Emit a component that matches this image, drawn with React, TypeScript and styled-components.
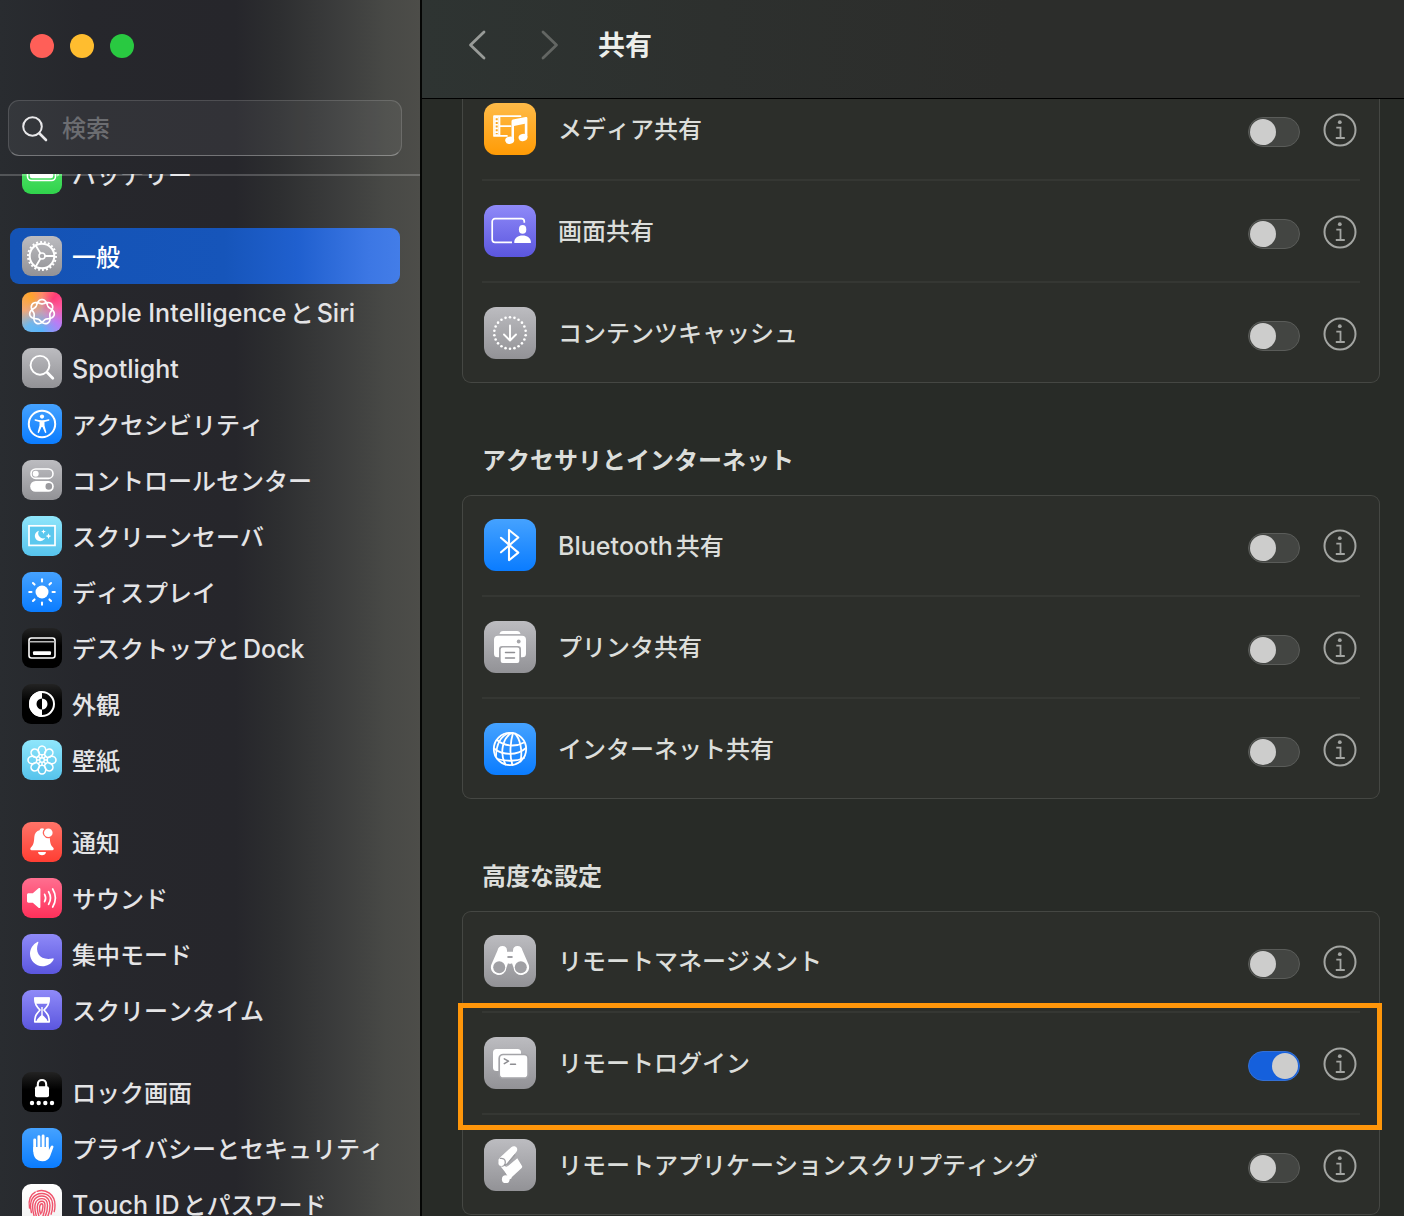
import React, { useLayoutEffect, useRef, useState } from "react";
import styled, { createGlobalStyle, css } from "styled-components";

const GlobalStyle = createGlobalStyle`
  *, *::before, *::after { box-sizing: border-box; }
  body {
    margin: 0;
    background: #282b27;
    color: #dcdedb;
    font-family: Inter, "Noto Sans CJK JP", sans-serif;
    font-size: 24px;
    font-kerning: none;
    line-height: 32px;
    text-autospace: normal;
  }
  ul { list-style: none; margin: 0; padding: 0; }
`;

const Window = styled.div`
  display: grid;
  grid-template-columns: 422px minmax(0, 1fr);
  height: 100vh;
  overflow: hidden;
`;

/* ---------- Sidebar ---------- */

const Sidebar = styled.aside`
  display: flex;
  flex-direction: column;
  min-height: 0;
  border-right: 2px solid #050605;
  background: linear-gradient(
    90deg,
    #292c30 0%,
    #26272c 20%,
    #26262b 56%,
    #2d2e30 66%,
    #3b3c3c 80%,
    #484946 92%,
    #4d4d49 100%
  );
`;

/* The translucent rule under the search box lies over the top of the list. */
const SidebarHeader = styled.div`
  position: relative;
  z-index: 1;
  display: flex;
  flex-direction: column;
  gap: 42px;
  margin-bottom: -2px;
  padding: 34px 18px 18px 8px;
  border-bottom: 2px solid rgba(255, 255, 255, 0.2);
`;

const TrafficLights = styled.div`
  display: flex;
  gap: 16px;
  padding-left: 22px;
`;

const Light = styled.button<{ $color: string }>`
  width: 24px;
  height: 24px;
  padding: 0;
  border: 0;
  border-radius: 50%;
  background: ${(p) => p.$color};
`;

const SearchBox = styled.label`
  display: flex;
  align-items: center;
  gap: 14px;
  height: 56px;
  padding: 2px 13px 0;
  border: 1px solid rgba(255, 255, 255, 0.14);
  border-bottom-color: rgba(255, 255, 255, 0.32);
  border-radius: 11px;
  background: rgba(255, 255, 255, 0.06);
`;

const SearchInput = styled.input`
  flex: 1;
  min-width: 0;
  padding: 0;
  border: 0;
  outline: 0;
  background: none;
  color: #e6e6e8;
  font: inherit;
  font-weight: 500;
  &::placeholder {
    color: #6c6d71;
    opacity: 1;
  }
`;

const SidebarNav = styled.nav`
  flex: 1;
  min-height: 0;
  overflow-y: auto;
  scrollbar-width: none;
  display: flex;
  flex-direction: column;
  gap: 26px;
  padding: 0 20px 0 10px;
`;

const SidebarLink = styled.a<{ $selected?: boolean }>`
  display: flex;
  align-items: center;
  gap: 10px;
  height: 56px;
  padding: 0 12px;
  border-radius: 9px;
  color: #e4e4e6;
  font-weight: 500;
  text-decoration: none;
  white-space: nowrap;
  ${(p) =>
    p.$selected &&
    css`
      color: #fff;
      background: linear-gradient(90deg, #1453b5 0%, #1655ba 55%, #2060cf 74%, #3c77e4 92%, #437de8 100%);
    `}
`;

const LinkText = styled.span`
  padding-top: 3px;
`;

const Latin = styled.span`
  font-size: 25px;
`;

const Tile = styled.span<{ $bg: string; $size: number }>`
  flex: none;
  display: block;
  width: ${(p) => p.$size}px;
  height: ${(p) => p.$size}px;
  border-radius: ${(p) => (p.$size > 40 ? 12 : 9)}px;
  background: ${(p) => p.$bg};
  overflow: hidden;
  svg { display: block; }
`;

/* ---------- Content ---------- */

const Content = styled.main`
  display: flex;
  flex-direction: column;
  min-width: 0;
  min-height: 0;
  background: #282b27;
`;

const Toolbar = styled.header`
  flex: none;
  display: flex;
  align-items: center;
  height: 99px;
  padding: 0 40px 8px 39px;
  border-bottom: 1px solid #000;
  background: linear-gradient(90deg, #2e3432 0%, #2d302e 30%, #2c2d2b 60%, #2c2d2b 100%);
`;

const HistoryButtons = styled.div`
  display: flex;
  gap: 41px;
  margin-right: 32px;
`;

const HistoryButton = styled.button`
  display: grid;
  place-items: center;
  width: 32px;
  height: 40px;
  padding: 0;
  border: 0;
  background: none;
  color: #989b98;
  &:disabled { color: #636663; }
`;

const PageTitle = styled.h1`
  margin: 0;
  padding-top: 2px;
  color: #eceeeb;
  font-size: 27px;
  font-weight: 700;
`;

const Pane = styled.div`
  flex: 1;
  min-height: 0;
  overflow-y: auto;
  scrollbar-width: none;
  display: flex;
  flex-direction: column;
  gap: 35px;
  padding: 0 24px 40px 40px;
`;

const Section = styled.section`
  display: flex;
  flex-direction: column;
  gap: 18px;
  & + & { padding-top: 27px; }
`;

const SectionTitle = styled.h2`
  margin: 0;
  padding-left: 20px;
  color: #dcdedb;
  font-size: 24px;
  font-weight: 600;
  line-height: 32px;
`;

const Card = styled.ul`
  border-radius: 9px;
  background: #2c2e2a;
  box-shadow: inset 0 0 0 1px #454743;
`;

const Row = styled.li`
  position: relative;
  display: flex;
  align-items: center;
  height: 100px;
  padding: 0 23px 0 22px;
  & + & {
    height: 102px;
    padding-top: 2px;
  }
  & + &::before {
    content: "";
    position: absolute;
    top: 0;
    left: 20px;
    right: 20px;
    height: 2px;
    background: #353733;
  }
`;

const RowLabel = styled.label`
  flex: 1;
  min-width: 0;
  margin-left: 22px;
  padding-top: 2px;
  font-weight: 500;
`;

const Switch = styled.input`
  appearance: none;
  flex: none;
  width: 52px;
  height: 30px;
  margin: 5px 23px 0 0;
  padding: 1px;
  border: 1px solid #5a5c59;
  border-radius: 15px;
  background: #434542;
  &::before {
    content: "";
    display: block;
    width: 26px;
    height: 26px;
    border-radius: 50%;
    background: #cdcdcc;
  }
  &:checked {
    border-color: #3470d4;
    background: #1560dc;
  }
  &:checked::before { margin-left: 22px; }
`;

const InfoButton = styled.button`
  flex: none;
  width: 34px;
  height: 34px;
  margin-top: 1px;
  padding: 0;
  border: 0;
  background: none;
  color: #a3a5a2;
  svg { display: block; }
`;

const Highlight = styled.div`
  position: absolute;
  z-index: 1;
  inset: -8px -2px -17px -4px;
  border: 5px solid #ff960a;
  pointer-events: none;
`;

/* ---------- Icon drawings ---------- */

const GREY = "linear-gradient(#bcbcc0, #929296)";
const BLUE = "linear-gradient(#45a2ff, #0a7cff)";
const CYAN = "linear-gradient(#8fe6fb, #56c3ec)";
const BLACK = "linear-gradient(#232323, #000 45%)";
const INDIGO = "linear-gradient(#8f8af8, #5b56de)";

type GlyphProps = { size: number; children: React.ReactNode };
const Glyph = ({ size, children }: GlyphProps) => (
  <svg
    width={size}
    height={size}
    viewBox={`0 0 ${size} ${size}`}
    fill="none"
    stroke="#fff"
    strokeWidth="2"
    strokeLinecap="round"
    strokeLinejoin="round"
    aria-hidden="true"
  >
    {children}
  </svg>
);

const polar = (c: number, r: number, deg: number) => {
  const a = (deg * Math.PI) / 180;
  return [c + r * Math.sin(a), c - r * Math.cos(a)];
};

/* Seven-lobed closed knot: the curve goes round twice before it meets itself. */
const knot = Array.from({ length: 241 }, (_, i) => {
  const deg = i * 3;
  const r = 10.3 + 2.2 * Math.cos((3.5 * deg * Math.PI) / 180);
  const [x, y] = polar(20, r, deg);
  return `${i ? "L" : "M"}${x.toFixed(2)} ${y.toFixed(2)}`;
}).join("");

const ring = (n: number) => Array.from({ length: n }, (_, i) => (360 / n) * i);

const fill = { fill: "#fff", stroke: "none" };

const Icons: Record<string, React.ReactNode> = {
  battery: (
    <>
      <rect x="5.5" y="13" width="28" height="13.5" rx="4" strokeWidth="1.6" />
      <rect x="7.8" y="15.2" width="23.4" height="9" rx="2.2" {...fill} />
      <path d="M35.5 17.5v5c1.6-.5 1.6-4.5 0-5z" {...fill} />
    </>
  ),
  gear: (
    <>
      <circle cx="20" cy="20" r="12.3" strokeWidth="2" />
      <circle cx="20" cy="20" r="14" strokeWidth="2" strokeLinecap="butt" pathLength="44" strokeDasharray="1 1" />
      <circle cx="20" cy="20" r="3" strokeWidth="1.5" />
      <path d="M23 20h9M18.4 17.3 13.6 9.2M18.4 22.7l-4.8 8.1" strokeWidth="1.8" />
    </>
  ),
  ai: <path d={knot + "Z"} strokeWidth="1.7" />,
  spotlight: (
    <>
      <circle cx="18" cy="17.3" r="9.4" strokeWidth="1.9" />
      <path d="m25.2 24.6 5.6 5.6" strokeWidth="2.8" />
    </>
  ),
  accessibility: (
    <>
      <circle cx="20" cy="20" r="13.2" />
      <circle cx="20" cy="12.6" r="2.1" {...fill} />
      <path
        d="M13.4 15.3c4.4 1.4 8.8 1.4 13.2 0 .9-.2 1.2 1.1.4 1.4l-4.5 1.3v3.5l1.8 6.500c.2 1-1 1.3-1.4.5L20.5 23h-1l-2.4 5.5c-.4.8-1.6.5-1.4-.5l1.8-6.5V18L13 16.7c-.8-.3-.5-1.6.4-1.4z"
        {...fill}
      />
    </>
  ),
  control: (
    <>
      <rect x="9" y="9" width="22" height="9.4" rx="4.7" strokeWidth="1.6" />
      <circle cx="13.7" cy="13.7" r="3" {...fill} />
      <rect x="8.2" y="21" width="23.6" height="10.8" rx="5.4" {...fill} />
      <circle cx="26.8" cy="26.4" r="3.3" fill="#9a9a9e" stroke="none" />
    </>
  ),
  screensaver: (
    <>
      <rect x="7" y="9.8" width="26" height="19.6" strokeWidth="1.7" fill="#5cc8ee" strokeLinejoin="miter" />
      <path d="M17 14.7a5.3 5.3 0 1 0 6 7.3 5 5 0 0 1-6-7.3z" {...fill} />
      <path d="m21.5 13.2.7 1.7 1.7.7-1.7.7-.7 1.7-.7-1.7-1.7-.7 1.7-.7zM26.5 17.3l.8 2 2 .8-2 .8-.8 2-.8-2-2-.8 2-.8z" {...fill} />
    </>
  ),
  display: (
    <>
      <circle cx="20" cy="20" r="6.5" {...fill} />
      {ring(8).map((d) => {
        const [x1, y1] = polar(20, 10.5, d);
        const [x2, y2] = polar(20, 12.8, d);
        return <line key={d} x1={x1} y1={y1} x2={x2} y2={y2} />;
      })}
    </>
  ),
  dock: (
    <>
      <rect x="7" y="10" width="26" height="20" rx="2.5" strokeWidth="1.6" />
      <path d="M7.5 13.8h25" stroke="#bbb" strokeWidth="1.6" />
      <rect x="11" y="23.2" width="18" height="3.8" rx="1" {...fill} />
    </>
  ),
  appearance: (
    <>
      <circle cx="20" cy="20" r="12" strokeWidth="2" />
      <path d="M20 7a13 13 0 0 0 0 26v-7.5a5.5 5.5 0 0 1 0-11z" {...fill} />
      <path d="M20 14.5a5.5 5.5 0 0 1 0 11z" {...fill} />
    </>
  ),
  wallpaper: (
    <>
      {ring(8).map((d) => (
        <ellipse key={d} cx="20" cy="10.4" rx="3.8" ry="4.4" strokeWidth="1.6" transform={`rotate(${d} 20 20)`} />
      ))}
      {ring(8).map((d) => (
        <line key={`l${d}`} x1="20" y1="17.3" x2="20" y2="14.8" strokeWidth="1.5" transform={`rotate(${d} 20 20)`} />
      ))}
      <circle cx="20" cy="20" r="2.3" strokeWidth="1.4" />
    </>
  ),
  bell: (
    <>
      <path
        d="M20 6.3c1 0 1.700.2 2.2.6a5.600 5.600 0 0 0 5.600 9.1c.3 5.300 1 7.300 3.500 9.700.8.8.5 2.600-1 2.600H9.700c-1.500 0-1.800-1.800-1-2.600 2.700-2.700 3.300-5 3.600-10.700.2-3.700 2.300-6 5.300-6.700.3-1.300 1-2 2.400-2z"
        {...fill}
      />
      <path d="M16 30h8c-.5 4.300-7.500 4.300-8 0z" {...fill} />
      <circle cx="26.3" cy="10.7" r="4.3" {...fill} />
    </>
  ),
  sound: (
    <>
      <path d="M5 17c0-1.200.6-1.700 1.600-1.700h4.200l5.700-5c.8-.7 1.900-.3 1.900.8v17.800c0 1.100-1.100 1.500-1.900.8l-5.700-5H6.600c-1 0-1.600-.5-1.600-1.700z" {...fill} />
      <path d="M22.600 16.300c1.300 2.300 1.300 5.100 0 7.400M26.600 13.700c2.300 3.800 2.300 8.800 0 12.600M30.700 11c3.300 5.500 3.300 12.500 0 18" strokeWidth="1.7" />
    </>
  ),
  moon: <path d="M16.300 8.700C12 19 19 27 30.500 24.400c1-.2 1.500.4 1 1.300C29.300 30 25 32.200 20.400 32.200 13.600 32.200 8 26.700 8 19.800c0-5 3-9.600 7.300-11.800.8-.4 1.300 0 1 .7z" {...fill} />,
  hourglass: (
    <>
      <path d="M12.800 8.200h14.400c0 6-1.500 7.700-5.200 11.800 3.700 4.100 5.200 5.800 5.200 11.800H12.800c0-6 1.500-7.700 5.200-11.800-3.700-4.100-5.200-5.800-5.200-11.800z" strokeWidth="1.7" />
      <path d="M12.300 7.500h15.400l-.8 6.300H13.100zM14.300 31.500c.6-2.800 3.200-4.500 5-6.300V17h1.400v8.200c1.800 1.800 4.400 3.500 5 6.300z" {...fill} />
    </>
  ),
  lock: (
    <>
      <rect x="13" y="14.2" width="14" height="11" rx="2" {...fill} />
      <path d="M15.800 15v-2.500c0-6 8.400-6 8.400 0V15" strokeWidth="2.1" />
      {[10, 16.7, 23.3, 30].map((x) => (
        <circle key={x} cx={x} cy="31" r="2.2" {...fill} />
      ))}
    </>
  ),
  hand: (
    <>
      <path d="M12.700 12v11M16.900 8.700V20M21.100 8V20M25.300 10.500V22" strokeWidth="2.9" />
      <path d="M11.300 19h15.400v3.400l2-4c.8-1.700 3.300-1 2.700.9l-3.200 8.600c-1.200 3.200-3.800 5.300-7.700 5.300-6 0-9.200-4-9.200-10.200z" {...fill} />
    </>
  ),
  touchid: (
    <g stroke="#f0526b" strokeWidth="1.4">
      <path d="M7.500 24c-1.600-8 1.400-13.700 5.700-15.900M15 7.300c9-3.200 18 3.500 18 13.700 0 2.600-.2 4.600-.8 6.500" />
      <path d="M9.400 28.500C6.600 17 11 9.500 20 9.500c6.600 0 10.600 5.200 10.600 11.500 0 3.800-.5 6.600-1.500 9.200" />
      <path d="M12 31.500C8.600 19.500 11.600 12 20 12c5.200 0 8 4.200 8 9.200 0 4.700-.8 8.300-2.400 11.500" />
      <path d="M14.700 33.300C11 22 13 14.600 20 14.600c3.800 0 5.500 3.200 5.500 6.800 0 5-1.100 9-3.200 12.500" />
      <path d="M17.600 33.700C14 25 14.500 17.200 20 17.200c2.200 0 3 2 3 4.300 0 4.500-.9 8.300-2.700 12" />
      <path d="M18.600 30c-1.800-4.500-1.300-10.200 1.300-10.200 2 0 .6 6-.2 9" />
    </g>
  ),
  media: (
    <>
      <path d="M36.500 13.200H10v19.700h13M15.500 13v19.500M15.500 23.200h11" strokeWidth="1.7" />
      <path d="M12.700 14v18" strokeWidth="4" strokeLinecap="butt" />
      <path d="M12.700 15.200v16" strokeWidth="2" stroke="#fda61d" strokeDasharray="2 1.7" strokeLinecap="butt" />
      <path d="M27.500 18.500c0-1 .5-1.600 1.500-1.900l12.700-2.600c1-.2 1.700.3 1.700 1.300v19h-2.600V20.800L30 23v14h-2.500z" {...fill} />
      <ellipse cx="25.7" cy="37.2" rx="4.500" ry="3.6" transform="rotate(-15 25.7 37.2)" {...fill} />
      <ellipse cx="39" cy="34.4" rx="4.500" ry="3.6" transform="rotate(-15 39 34.4)" {...fill} />
    </>
  ),
  screen: (
    <>
      <path d="M28 37.300H11A2.800 2.800 0 0 1 8.200 34.500v-18A2.800 2.800 0 0 1 11 13.700h26.500a2.800 2.800 0 0 1 2.800 2.800v1.300" strokeWidth="1.7" strokeLinecap="butt" />
      <ellipse cx="38.6" cy="24.4" rx="3.7" ry="4.3" {...fill} />
      <path d="M30.200 37.200c.3-4.500 3.700-6.800 8.400-6.800s8.100 2.300 8.400 6.800c0 .6-.3.900-.9.900h-15c-.6 0-.9-.3-.9-.9z" {...fill} />
    </>
  ),
  cache: (
    <>
      {ring(22).map((d) => {
        const [x, y] = polar(26, 15.8, d);
        return <circle key={d} cx={x} cy={y} r="1.3" {...fill} />;
      })}
      <path d="M26 18.500v14.700M20 27.500l6 6 6-6" strokeWidth="1.9" />
    </>
  ),
  bluetooth: <path d="m17 18.800 17.300 14.800L25 41.200V11l9.300 7.500L17 33.300" strokeWidth="2.1" />,
  printer: (
    <>
      <path d="M15.500 13c.5-2 1.500-3 3.500-3h14c2 0 3 1 3.500 3z" {...fill} />
      <path d="M14 14.700h24a4 4 0 0 1 4 4v14a3.600 3.600 0 0 1-3.600 3.600H37V28a3 3 0 0 0-3-3H18a3 3 0 0 0-3 3v8.300h-1.400A3.600 3.600 0 0 1 10 32.700v-14a4 4 0 0 1 4-4z" {...fill} />
      <circle cx="34.7" cy="20.5" r="1.9" fill="#a6a6aa" stroke="none" />
      <rect x="16.7" y="26.4" width="18.6" height="15.6" rx="2" {...fill} />
      <path d="M21.500 31.500h9M21.500 37h9" stroke="#8f8f93" strokeWidth="1.5" />
    </>
  ),
  globe: (
    <g strokeWidth="1.8">
      <circle cx="26" cy="26" r="16.2" />
      <path d="M28 10c-9 4-13 20-6.500 31.500M29 10c-2.500 8-4 22-.5 32M31 10.500c5 5 7.800 17 5.500 28M25 10c-7 2.500-12.500 9-13 23" />
      <path d="M13 17c7 6 18 7.500 27 2.500M10 25.500c9 7 23 7.500 32-.5M13.500 36c8 2.500 19 2.500 26.500-1" />
    </g>
  ),
  binoculars: (
    <>
      <path d="M13.500 15.500c.7-3 2-4.500 5-4.500 2.800 0 4.500 1.700 4.500 4.400v1.300h6v-1.300c0-2.700 1.700-4.400 4.500-4.400 3 0 4.300 1.500 5 4.500L44.400 29a7.800 7.800 0 1 1-14.900 3.500l-1.500-4.300c-1.300.8-2.700.8-4 0l-1.500 4.300A7.800 7.800 0 1 1 7.600 29z" {...fill} />
      <circle cx="15.2" cy="32.3" r="6" fill="#a0a0a4" stroke="none" />
      <circle cx="36.8" cy="32.3" r="6" fill="#a0a0a4" stroke="none" />
      <rect x="23.2" y="21" width="5.6" height="2" rx="1" fill="#a0a0a4" stroke="none" />
    </>
  ),
  terminal: (
    <>
      <rect x="9" y="12" width="28" height="22" rx="3.5" {...fill} />
      <rect x="15.2" y="17.5" width="28.9" height="23.7" rx="4" fill="#fff" stroke="#a4a4a8" strokeWidth="1.7" />
      <path d="m20.300 21.800 4.200 2.400-4.200 2.400M26.500 27.300h5" stroke="#8d8d91" strokeWidth="1.5" />
    </>
  ),
  script: (
    <>
      <path d="M33.300 19.300 38 27c.4.700.3 1.200-.3 1.900L26.300 39.600 16.500 27.300c2.500 1 5.600 1 7.500-.3z" {...fill} />
      <path d="M20.500 28.500 26 38.500" strokeWidth="3" />
      <path d="m24 27-9.300-4.300c-.6-1.700 0-3 1.300-4.200L27.200 8.200C29 6.700 32 7 33 9.200c.5 1.300.3 2.700-.7 3.900L22 25.500z" {...fill} />
      <path d="M16.300 19.400c2.700-.5 5 1 5 3.600 0 1.500-.4 2.500-.9 3.300 1.600-.2 2.600-1 3.400-2l7-8.300" stroke="#9d9da1" strokeWidth="1.3" />
      <circle cx="17.3" cy="24" r="2.9" {...fill} />
      <circle cx="21.8" cy="40.2" r="3.9" {...fill} />
    </>
  ),
};

/* ---------- Data ---------- */

type NavItem = { icon: string; bg: string; label: string; selected?: boolean };

const AI_BG =
  "radial-gradient(circle, #c4a0b4 0, rgba(196, 160, 180, 0) 60%), conic-gradient(from 0deg, #ff8a6a, #ff3c78 40deg, #ff5aa0 75deg, #b97cf5 125deg, #5ab4fa 180deg, #6cb8ee 225deg, #f0a878 275deg, #ffa52c 325deg, #ff8a6a)";

const navGroups: NavItem[][] = [
  [{ icon: "battery", bg: "linear-gradient(#5fe873, #30d34c)", label: "バッテリー" }],
  [
    { icon: "gear", bg: GREY, label: "一般", selected: true },
    { icon: "ai", bg: AI_BG, label: "Apple IntelligenceとSiri" },
    { icon: "spotlight", bg: GREY, label: "Spotlight" },
    { icon: "accessibility", bg: BLUE, label: "アクセシビリティ" },
    { icon: "control", bg: GREY, label: "コントロールセンター" },
    { icon: "screensaver", bg: CYAN, label: "スクリーンセーバ" },
    { icon: "display", bg: BLUE, label: "ディスプレイ" },
    { icon: "dock", bg: BLACK, label: "デスクトップとDock" },
    { icon: "appearance", bg: BLACK, label: "外観" },
    { icon: "wallpaper", bg: CYAN, label: "壁紙" },
  ],
  [
    { icon: "bell", bg: "linear-gradient(#ff7468, #ff3e33)", label: "通知" },
    { icon: "sound", bg: "linear-gradient(#ff6f90, #ff305a)", label: "サウンド" },
    { icon: "moon", bg: INDIGO, label: "集中モード" },
    { icon: "hourglass", bg: INDIGO, label: "スクリーンタイム" },
  ],
  [
    { icon: "lock", bg: BLACK, label: "ロック画面" },
    { icon: "hand", bg: BLUE, label: "プライバシーとセキュリティ" },
    { icon: "touchid", bg: "linear-gradient(#fff, #f1f1f1)", label: "Touch IDとパスワード" },
  ],
];

type Service = { icon: string; bg: string; label: string; on?: boolean; highlighted?: boolean };

const sections: { title?: string; services: Service[] }[] = [
  {
    services: [
      { icon: "media", bg: "linear-gradient(#ffbb48, #ff9b05)", label: "メディア共有" },
      { icon: "screen", bg: INDIGO, label: "画面共有" },
      { icon: "cache", bg: GREY, label: "コンテンツキャッシュ" },
    ],
  },
  {
    title: "アクセサリとインターネット",
    services: [
      { icon: "bluetooth", bg: BLUE, label: "Bluetooth共有" },
      { icon: "printer", bg: GREY, label: "プリンタ共有" },
      { icon: "globe", bg: BLUE, label: "インターネット共有" },
    ],
  },
  {
    title: "高度な設定",
    services: [
      { icon: "binoculars", bg: GREY, label: "リモートマネージメント" },
      { icon: "terminal", bg: GREY, label: "リモートログイン", on: true, highlighted: true },
      { icon: "script", bg: GREY, label: "リモートアプリケーションスクリプティング" },
    ],
  },
];

/* Sets Latin runs slightly larger than the Japanese text around them. */
const mixed = (text: string) =>
  text.split(/([A-Za-z ]+)/).map((part, i) => (i % 2 ? <Latin key={i}>{part}</Latin> : part));

function useScrollPosition<T extends HTMLElement>(top: number) {
  const ref = useRef<T>(null);
  useLayoutEffect(() => {
    if (ref.current) ref.current.scrollTop = top;
  }, [top]);
  return ref;
}

function ServiceRow({ service }: { service: Service }) {
  const [on, setOn] = useState(!!service.on);
  const id = `service-${service.icon}`;
  return (
    <Row>
      <Tile $bg={service.bg} $size={52}>
        <Glyph size={52}>{Icons[service.icon]}</Glyph>
      </Tile>
      <RowLabel htmlFor={id}>{mixed(service.label)}</RowLabel>
      <Switch id={id} type="checkbox" role="switch" checked={on} onChange={() => setOn(!on)} />
      <InfoButton type="button" aria-label="info">
        <svg width="34" height="34" viewBox="0 0 34 34" fill="none" stroke="currentColor" strokeWidth="2" aria-hidden="true">
          <circle cx="17" cy="17" r="15.5" />
          <circle cx="16.8" cy="9.2" r="1.9" fill="currentColor" stroke="none" />
          <path d="M13.300 14.600h4.200v10.300M12.800 25h9" strokeWidth="1.8" />
        </svg>
      </InfoButton>
      {service.highlighted && <Highlight />}
    </Row>
  );
}

export default function App() {
  const navRef = useScrollPosition<HTMLElement>(28);
  const paneRef = useScrollPosition<HTMLDivElement>(20);
  return (
    <>
      <GlobalStyle />
      <Window>
        <Sidebar>
          <SidebarHeader>
            <TrafficLights>
              <Light type="button" aria-label="close" $color="#ff5f58" />
              <Light type="button" aria-label="minimize" $color="#ffbd2f" />
              <Light type="button" aria-label="zoom" $color="#29c941" />
            </TrafficLights>
            <SearchBox>
              <svg width="26" height="26" viewBox="0 0 26 26" fill="none" stroke="#e8e8ea" strokeLinecap="round" aria-hidden="true">
                <circle cx="10.5" cy="10.5" r="9.3" strokeWidth="2" />
                <path d="m17.500 17.500 6.500 6.500" strokeWidth="2.6" />
              </svg>
              <SearchInput type="search" placeholder="検索" aria-label="検索" />
            </SearchBox>
          </SidebarHeader>
          <SidebarNav ref={navRef}>
            {navGroups.map((group, i) => (
              <ul key={i}>
                {group.map((item) => (
                  <li key={item.icon}>
                    <SidebarLink href={`#${item.icon}`} $selected={item.selected}>
                      <Tile $bg={item.bg} $size={40}>
                        <Glyph size={40}>{Icons[item.icon]}</Glyph>
                      </Tile>
                      <LinkText>{mixed(item.label)}</LinkText>
                    </SidebarLink>
                  </li>
                ))}
              </ul>
            ))}
          </SidebarNav>
        </Sidebar>
        <Content>
          <Toolbar>
            <HistoryButtons>
              <HistoryButton type="button" aria-label="back">
                <svg width="20" height="32" viewBox="0 0 20 32" fill="none" stroke="currentColor" strokeWidth="2.8" strokeLinecap="round" strokeLinejoin="round">
                  <path d="M17 3 3.500 16 17 29" />
                </svg>
              </HistoryButton>
              <HistoryButton type="button" aria-label="forward" disabled>
                <svg width="20" height="32" viewBox="0 0 20 32" fill="none" stroke="currentColor" strokeWidth="2.8" strokeLinecap="round" strokeLinejoin="round">
                  <path d="M3 3 16.500 16 3 29" />
                </svg>
              </HistoryButton>
            </HistoryButtons>
            <PageTitle>共有</PageTitle>
          </Toolbar>
          <Pane ref={paneRef}>
            {sections.map((section, i) => (
              <Section key={i}>
                {section.title && <SectionTitle>{section.title}</SectionTitle>}
                <Card>
                  {section.services.map((service) => (
                    <ServiceRow key={service.icon} service={service} />
                  ))}
                </Card>
              </Section>
            ))}
          </Pane>
        </Content>
      </Window>
    </>
  );
}
